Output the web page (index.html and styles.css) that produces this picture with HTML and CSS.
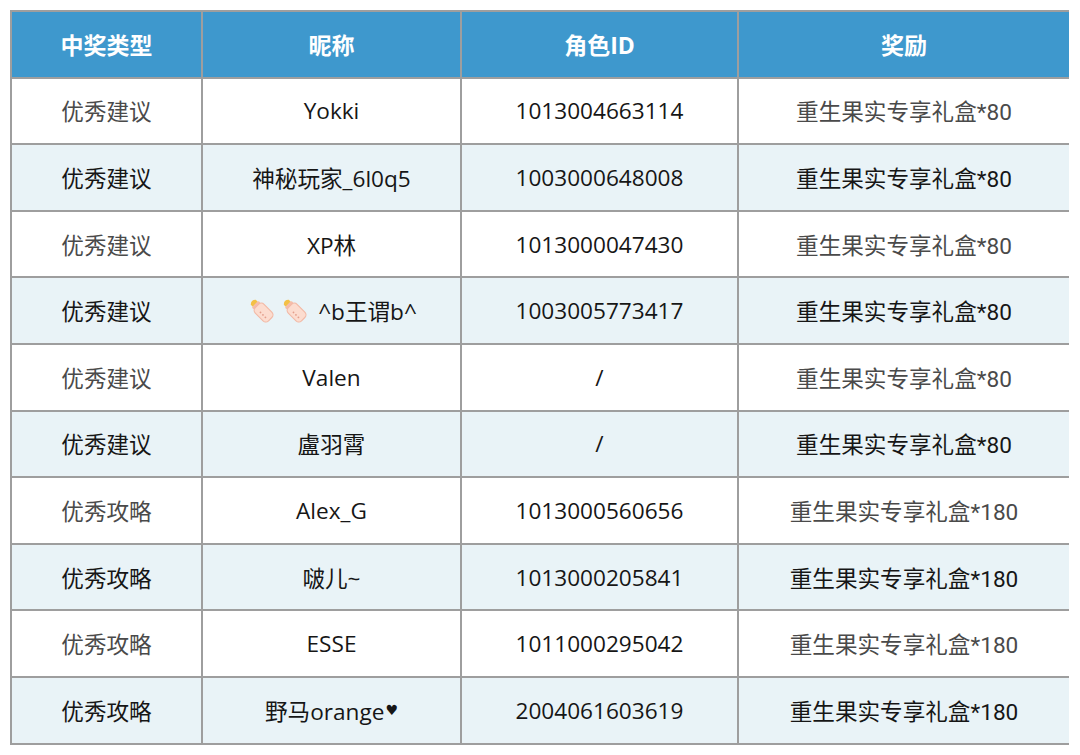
FILE: index.html
```html
<!DOCTYPE html>
<html lang="zh-CN">
<head>
<meta charset="utf-8">
<link rel="stylesheet" href="styles.css">
</head>
<body>
<div class="table">
  <div class="cell head">中奖类型</div>
  <div class="cell head">昵称</div>
  <div class="cell head">角色ID</div>
  <div class="cell head">奖励</div>

  <div class="cell w soft">优秀建议</div>
  <div class="cell w">Yokki</div>
  <div class="cell w">1013004663114</div>
  <div class="cell w soft reward">重生果实专享礼盒*80</div>

  <div class="cell b">优秀建议</div>
  <div class="cell b">神秘玩家_6l0q5</div>
  <div class="cell b">1003000648008</div>
  <div class="cell b reward">重生果实专享礼盒*80</div>

  <div class="cell w soft">优秀建议</div>
  <div class="cell w">XP林</div>
  <div class="cell w">1013000047430</div>
  <div class="cell w soft reward">重生果实专享礼盒*80</div>

  <div class="cell b">优秀建议</div>
  <div class="cell b"><span class="bottles">
    <svg class="bottle" viewBox="0 0 24 24"><g transform="rotate(-45 12 12)"><path d="M9.3 3 Q12 0.2 14.7 3 L14.7 5.2 L9.3 5.2 Z" fill="#f3c046"/><rect x="8.4" y="5" width="7.2" height="2.2" rx="0.8" fill="#f6bcaa"/><rect x="7.2" y="7" width="9.6" height="14.5" rx="3" fill="#fcdccf" stroke="#f2b9a6" stroke-width="0.9"/><circle cx="10.4" cy="12.5" r="0.7" fill="#e39e8c"/><circle cx="10.4" cy="15.2" r="0.7" fill="#e39e8c"/><circle cx="10.4" cy="17.9" r="0.7" fill="#e39e8c"/></g></svg>
    <svg class="bottle" viewBox="0 0 24 24"><g transform="rotate(-45 12 12)"><path d="M9.3 3 Q12 0.2 14.7 3 L14.7 5.2 L9.3 5.2 Z" fill="#f3c046"/><rect x="8.4" y="5" width="7.2" height="2.2" rx="0.8" fill="#f6bcaa"/><rect x="7.2" y="7" width="9.6" height="14.5" rx="3" fill="#fcdccf" stroke="#f2b9a6" stroke-width="0.9"/><circle cx="10.4" cy="12.5" r="0.7" fill="#e39e8c"/><circle cx="10.4" cy="15.2" r="0.7" fill="#e39e8c"/><circle cx="10.4" cy="17.9" r="0.7" fill="#e39e8c"/></g></svg>
  </span>^b王谓b^</div>
  <div class="cell b">1003005773417</div>
  <div class="cell b reward">重生果实专享礼盒*80</div>

  <div class="cell w soft">优秀建议</div>
  <div class="cell w">Valen</div>
  <div class="cell w">/</div>
  <div class="cell w soft reward">重生果实专享礼盒*80</div>

  <div class="cell b">优秀建议</div>
  <div class="cell b">盧羽霄</div>
  <div class="cell b">/</div>
  <div class="cell b reward">重生果实专享礼盒*80</div>

  <div class="cell w soft">优秀攻略</div>
  <div class="cell w">Alex_G</div>
  <div class="cell w">1013000560656</div>
  <div class="cell w soft reward">重生果实专享礼盒*180</div>

  <div class="cell b">优秀攻略</div>
  <div class="cell b">啵儿~</div>
  <div class="cell b">1013000205841</div>
  <div class="cell b reward">重生果实专享礼盒*180</div>

  <div class="cell w soft">优秀攻略</div>
  <div class="cell w">ESSE</div>
  <div class="cell w">1011000295042</div>
  <div class="cell w soft reward">重生果实专享礼盒*180</div>

  <div class="cell b">优秀攻略</div>
  <div class="cell b">野马orange<span class="heart">♥</span></div>
  <div class="cell b">2004061603619</div>
  <div class="cell b reward">重生果实专享礼盒*180</div>
</div>
</body>
</html>
```

FILE: styles.css
```css
html, body {
  margin: 0;
  padding: 0;
  background: #ffffff;
}
body {
  font-family: "Open Sans", "Noto Sans CJK SC", sans-serif;
}
.table {
  margin: 10px 0 0 10px;
  width: 1059px;
  display: grid;
  grid-template-columns: 189px 257px 275px 330px;
  grid-auto-rows: 64.6px;
  gap: 2px;
  padding: 2px;
  box-sizing: border-box;
  background: #9e9e9e;
}
.cell {
  display: flex;
  align-items: center;
  justify-content: center;
  font-size: 22.6px;
  color: #161616;
  white-space: nowrap;
}
.head {
  background: #3e98cd;
  color: #ffffff;
  font-weight: bold;
  font-size: 23px;
}
.w { background: #ffffff; }
.b { background: #e9f3f7; }
.soft { color: #4a4a4a; }
.reward {
  font-family: Roboto, "Noto Sans CJK SC", sans-serif;
}
.bottles {
  display: inline-flex;
  gap: 2px;
  margin-right: 8px;
}
.bottle {
  width: 31px;
  height: 31px;
}
.heart {
  font-family: "DejaVu Sans", sans-serif;
  font-size: 14px;
  margin-left: 1px;
}
```
